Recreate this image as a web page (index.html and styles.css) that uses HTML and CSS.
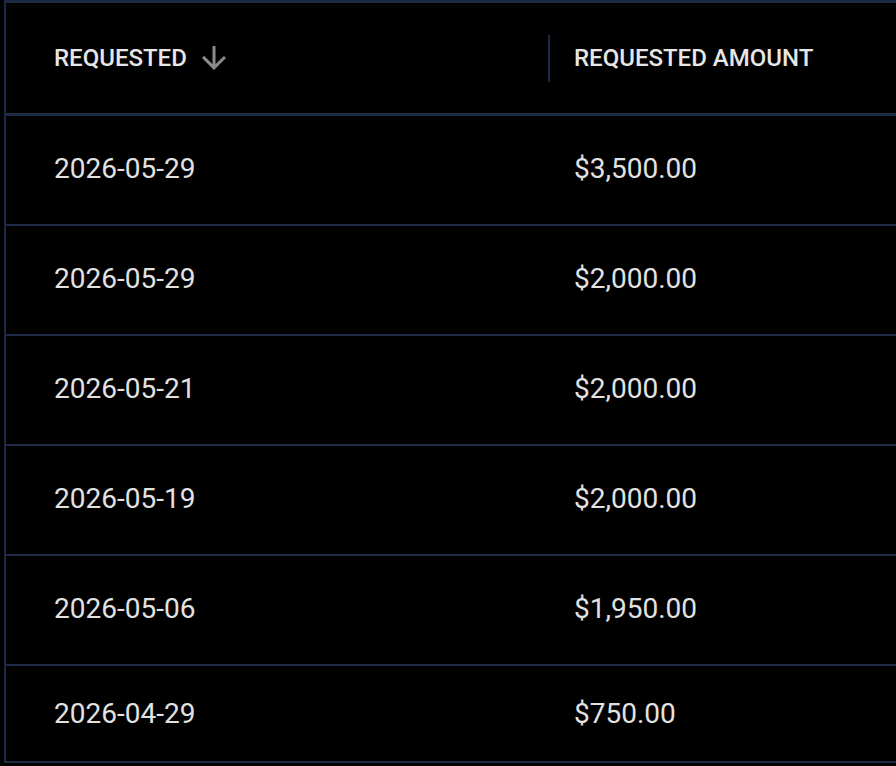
FILE: index.html
```html
<!DOCTYPE html>
<html lang="en">
<head>
    <meta charset="UTF-8">
    <title>Requests</title>
    <link rel="stylesheet" href="styles.css">
</head>
<body>
    <div class="grid">
        <div class="row head">
            <div class="cell">
                <span class="label">REQUESTED</span>
                <svg class="sort" viewBox="0 0 24 24" width="36" height="36"><path d="M20 12l-1.41-1.41L13 16.17V4h-2v12.17l-5.58-5.59L4 12l8 8 8-8z"/></svg>
            </div>
            <div class="cell">
                <span class="label divided">REQUESTED AMOUNT</span>
            </div>
        </div>
        <div class="row"><div class="cell">2026-05-29</div><div class="cell amt">$3,500.00</div></div>
        <div class="row"><div class="cell">2026-05-29</div><div class="cell amt">$2,000.00</div></div>
        <div class="row"><div class="cell">2026-05-21</div><div class="cell amt">$2,000.00</div></div>
        <div class="row"><div class="cell">2026-05-19</div><div class="cell amt">$2,000.00</div></div>
        <div class="row"><div class="cell">2026-05-06</div><div class="cell amt">$1,950.00</div></div>
        <div class="row last"><div class="cell">2026-04-29</div><div class="cell amt">$750.00</div></div>
    </div>
</body>
</html>
```

FILE: styles.css
```css
body {
    margin: 0;
    background: #000;
    font-family: Roboto, "Liberation Sans", sans-serif;
    color: #e2e2e2;
    overflow: hidden;
}

.grid {
    margin-left: 4px;
    border-top: 3px solid #1c2a45;
    border-left: 2px solid #1c2a45;
}

.row {
    display: grid;
    grid-template-columns: 542px 1fr;
    height: 108px;
    border-bottom: 2px solid #1c2a45;
    font-size: 28px;
}

.row .cell {
    padding-bottom: 3px;
}

.row.head {
    height: 110px;
    border-bottom-width: 3px;
    font-size: 24px;
    font-weight: 500;
}

.row.head .cell,
.row.last .cell {
    padding-bottom: 0;
}

.row.last {
    height: 95px;
}

.cell {
    display: flex;
    align-items: center;
    padding-left: 48px;
}

.cell.amt {
    padding-left: 26px;
}

.head .cell + .cell {
    padding-left: 0;
}

.label {
    color: #e6e6e6;
}

.label.divided {
    display: flex;
    align-items: center;
    height: 47px;
    padding-left: 24px;
    border-left: 2px solid #1c2a45;
}

.sort {
    margin-left: 9px;
    fill: #8a8a8a;
}
```
